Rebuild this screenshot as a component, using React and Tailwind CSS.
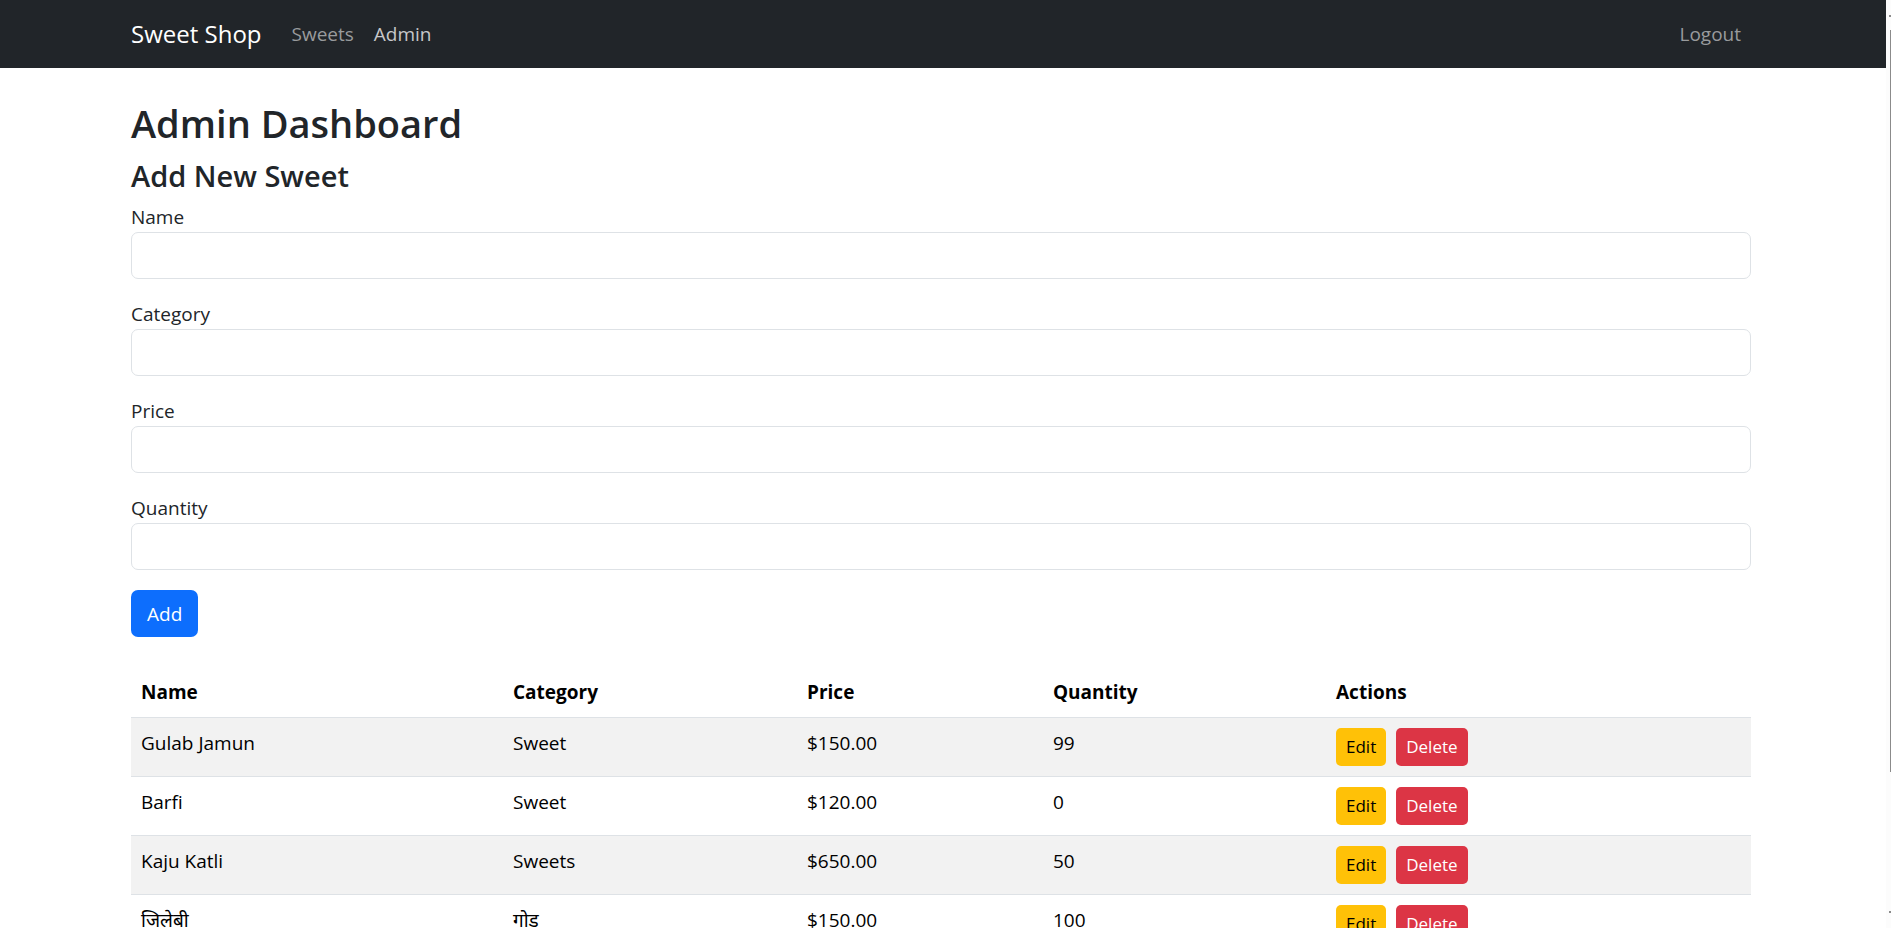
import React from "react";

const fields = [
  { id: "name", label: "Name", type: "text" },
  { id: "category", label: "Category", type: "text" },
  { id: "price", label: "Price", type: "text" },
  { id: "quantity", label: "Quantity", type: "text" },
];

const sweets = [
  { name: "Gulab Jamun", category: "Sweet", price: "$150.00", quantity: 99 },
  { name: "Barfi", category: "Sweet", price: "$120.00", quantity: 0 },
  { name: "Kaju Katli", category: "Sweets", price: "$650.00", quantity: 50 },
  { name: "जिलेबी", category: "गोड", price: "$150.00", quantity: 100 },
];

function Navbar() {
  return (
    <nav className="bg-[#212529] py-[10px] pr-1">
      <div className="mx-auto flex max-w-[1620px] items-center">
        <a href="#" className="mr-5 text-[24px] leading-[38px] text-white">
          Sweet Shop
        </a>
        <a href="#sweets" className="px-[10px] py-[9px] leading-[30px] text-[#999b9d]">
          Sweets
        </a>
        <a href="#admin" className="px-[10px] py-[9px] leading-[30px] text-[#c7c8c9]">
          Admin
        </a>
        <button type="button" className="ml-auto px-[10px] py-[9px] leading-[30px] text-[#999b9d]">
          Logout
        </button>
      </div>
    </nav>
  );
}

function SweetForm() {
  return (
    <form onSubmit={(e) => e.preventDefault()}>
      {fields.map((f) => (
        <div key={f.id} className="mb-5">
          <label htmlFor={f.id} className="block leading-[30px]">
            {f.label}
          </label>
          <input
            id={f.id}
            type={f.type}
            className="block h-[47px] w-full rounded-[7px] border border-[#dee2e6] bg-white px-[15px]"
          />
        </div>
      ))}
      <button type="submit" className="h-[47px] rounded-[7px] bg-[#0d6efd] px-4 leading-[30px] text-white">
        Add
      </button>
    </form>
  );
}

function SweetTable() {
  return (
    <table className="mt-[30px] w-full table-fixed border-collapse text-left text-black">
      <colgroup>
        <col className="w-[372px]" />
        <col className="w-[294px]" />
        <col className="w-[246px]" />
        <col className="w-[283px]" />
        <col />
      </colgroup>
      <thead>
        <tr className="border-b border-[#dee2e6]">
          {["Name", "Category", "Price", "Quantity", "Actions"].map((h) => (
            <th key={h} scope="col" className="p-[10px] leading-[30px] font-bold">
              {h}
            </th>
          ))}
        </tr>
      </thead>
      <tbody>
        {sweets.map((s) => (
          <tr key={s.name} className="border-b border-[#dee2e6] align-top leading-[30px] odd:bg-[#f2f2f2]">
            <td className="p-[10px]">{s.name}</td>
            <td className="p-[10px]">{s.category}</td>
            <td className="p-[10px]">{s.price}</td>
            <td className="p-[10px]">{s.quantity}</td>
            <td className="p-[10px]">
              <div className="flex gap-[10px] text-[17px]">
                <button type="button" className="h-[38px] rounded-[5px] bg-[#ffc107] px-[10px] leading-[26px]">
                  Edit
                </button>
                <button type="button" className="h-[38px] rounded-[5px] bg-[#dc3545] px-[10px] leading-[26px] text-white">
                  Delete
                </button>
              </div>
            </td>
          </tr>
        ))}
      </tbody>
    </table>
  );
}

function ScrollTrack() {
  return (
    <div aria-hidden="true" className="flex w-[5px] shrink-0 flex-col items-end bg-[#fcfcfc]">
      <div className="mt-[15px] h-[2px] w-[2px] bg-[#8b8b8b]" />
      <div className="mt-[13px] h-[80%] w-px bg-[#8b8b8b]" />
      <div className="mt-auto mb-[15px] h-[2px] w-[2px] bg-[#8b8b8b]" />
    </div>
  );
}

export default function App() {
  return (
    <div className="flex h-screen bg-white font-['Open_Sans','Noto_Sans',sans-serif] text-[19px] text-[#212529]">
      <div className="min-w-0 flex-1 overflow-y-auto [scrollbar-width:none]">
        <Navbar />
        <main className="pr-1">
          <div className="mx-auto max-w-[1620px] pt-[30px]">
            <h2 className="mb-[10px] text-[38px] leading-[50px] font-semibold">Admin Dashboard</h2>
            <h4 className="mb-[8px] text-[29px] leading-[36px] font-semibold">Add New Sweet</h4>
            <SweetForm />
            <SweetTable />
          </div>
        </main>
      </div>
      <ScrollTrack />
    </div>
  );
}
